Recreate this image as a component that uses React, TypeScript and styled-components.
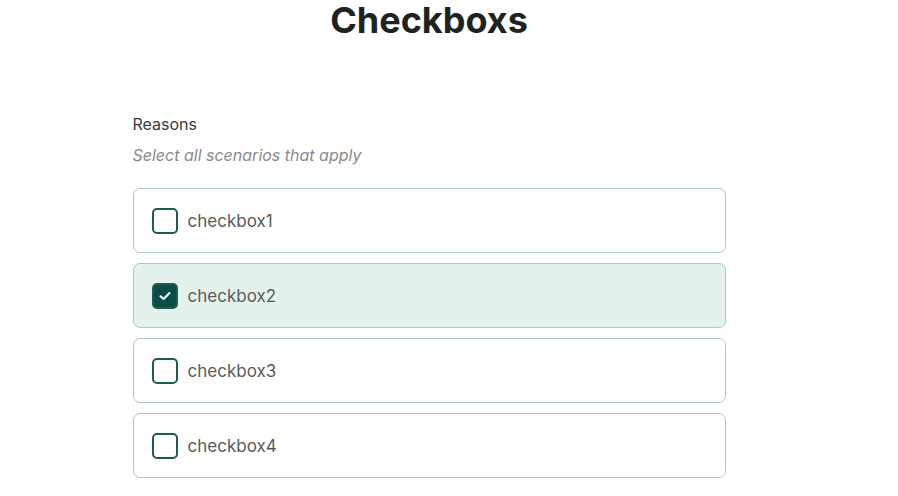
import styled, { createGlobalStyle } from "styled-components";

const GlobalStyle = createGlobalStyle`
  body {
    margin: 0;
    background: #ffffff;
    font-family: "Inter", "Open Sans", sans-serif;
  }
`;

const Page = styled.div`
  width: 858px;
  display: flex;
  flex-direction: column;
  align-items: center;
`;

const Title = styled.h1`
  margin: 0;
  font-size: 36px;
  font-weight: 700;
  color: #1e2322;
  line-height: 40px;
`;

const Fieldset = styled.div`
  width: 593px;
  margin-top: 74px;
  display: flex;
  flex-direction: column;
`;

const Legend = styled.div`
  font-size: 16px;
  color: #3a3a3a;
  line-height: 20px;
`;

const Hint = styled.div`
  margin-top: 11px;
  font-size: 16px;
  font-style: italic;
  color: #8a8a8a;
  line-height: 20px;
`;

const List = styled.div`
  margin-top: 23px;
  display: flex;
  flex-direction: column;
  gap: 10px;
`;

const Option = styled.label<{ $checked: boolean }>`
  height: 65px;
  box-sizing: border-box;
  display: flex;
  align-items: center;
  gap: 10px;
  padding: 0 18px;
  border: 1.5px solid #a9cac5;
  border-radius: 7px;
  background: ${(p) => (p.$checked ? "#e4f2ee" : "#ffffff")};
  cursor: pointer;
`;

const Box = styled.span<{ $checked: boolean }>`
  width: 26px;
  height: 26px;
  box-sizing: border-box;
  border-radius: 5px;
  border: 2px solid #1f5a55;
  background: ${(p) => (p.$checked ? "#0c4c47" : "#ffffff")};
  display: flex;
  align-items: center;
  justify-content: center;
`;

const Text = styled.span`
  font-size: 17px;
  color: #5a5a5a;
`;

const items = [
  { label: "checkbox1", checked: false },
  { label: "checkbox2", checked: true },
  { label: "checkbox3", checked: false },
  { label: "checkbox4", checked: false },
];

export default function App() {
  return (
    <Page>
      <GlobalStyle />
      <Title>Checkboxs</Title>
      <Fieldset>
        <Legend>Reasons</Legend>
        <Hint>Select all scenarios that apply</Hint>
        <List>
          {items.map((item) => (
            <Option key={item.label} $checked={item.checked}>
              <Box $checked={item.checked}>
                {item.checked && (
                  <svg width="14" height="14" viewBox="0 0 14 14">
                    <path
                      d="M2.5 7.2 L5.6 10 L11.5 4"
                      fill="none"
                      stroke="#fff"
                      strokeWidth="2"
                      strokeLinecap="round"
                      strokeLinejoin="round"
                    />
                  </svg>
                )}
              </Box>
              <Text>{item.label}</Text>
            </Option>
          ))}
        </List>
      </Fieldset>
    </Page>
  );
}
